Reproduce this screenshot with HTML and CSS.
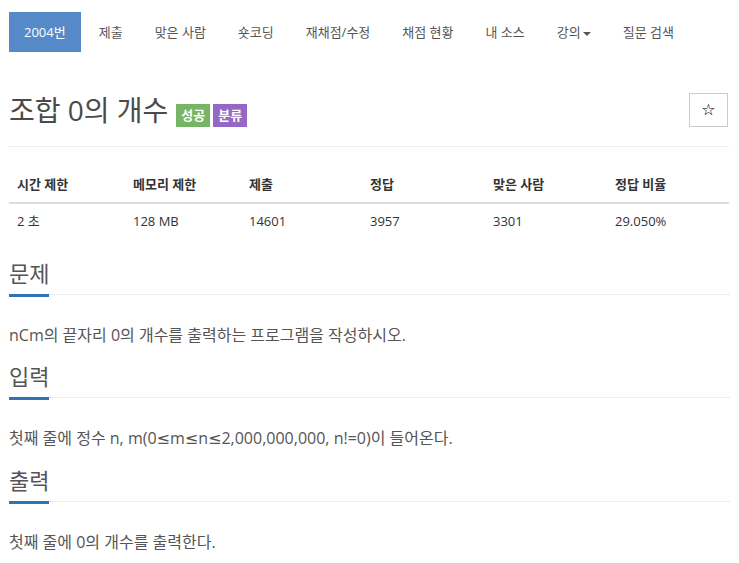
FILE: index.html
```html
<!DOCTYPE html>
<html lang="ko">
<head>
  <meta charset="UTF-8" />
  <title>2004번: 조합 0의 개수</title>
  <link rel="stylesheet" href="styles.css">
</head>
<body>
  <div class="wrapper">

    <ul class="problem-menu">
      <li class="active">2004번</li>
      <li>제출</li>
      <li>맞은 사람</li>
      <li>숏코딩</li>
      <li>재채점/수정</li>
      <li>채점 현황</li>
      <li>내 소스</li>
      <li>강의<span class="caret"></span></li>
      <li>질문 검색</li>
    </ul>

    <div class="page-header">
      <h1 class="problem-title">
        <span>조합 0의 개수</span>
        <span class="label label-success">성공</span>
        <span class="label label-purple">분류</span>
      </h1>
      <button class="btn-star">&#9734;</button>
    </div>

    <table class="problem-info">
      <thead>
        <tr>
          <th>시간 제한</th>
          <th>메모리 제한</th>
          <th>제출</th>
          <th>정답</th>
          <th>맞은 사람</th>
          <th>정답 비율</th>
        </tr>
      </thead>
      <tbody>
        <tr>
          <td>2 초</td>
          <td>128 MB</td>
          <td>14601</td>
          <td>3957</td>
          <td>3301</td>
          <td>29.050%</td>
        </tr>
      </tbody>
    </table>

    <section class="problem-section">
      <h2 class="headline"><span>문제</span></h2>
      <p>nCm의 끝자리 0의 개수를 출력하는 프로그램을 작성하시오.</p>
    </section>

    <section class="problem-section">
      <h2 class="headline"><span>입력</span></h2>
      <p>첫째 줄에 정수 n, m(0<span class="math">≤</span>m<span class="math">≤</span>n<span class="math">≤</span>2,000,000,000, n!=0)이 들어온다.</p>
    </section>

    <section class="problem-section">
      <h2 class="headline"><span>출력</span></h2>
      <p>첫째 줄에 0의 개수를 출력한다.</p>
    </section>

  </div>
</body>
</html>
```

FILE: styles.css
```css
body { margin: 0; font-family: "Open Sans", "Noto Sans CJK KR", sans-serif; font-size: 14px; color: #333; background: #fff; }
.wrapper { padding: 12px 10px 0 9px; }

/* problem menu */
.problem-menu { list-style: none; margin: 0; padding: 0; display: flex; font-size: 13px; }
.problem-menu li { height: 40px; line-height: 40px; padding: 0 16px; color: #555; white-space: nowrap; }
.problem-menu li.active { padding: 0 15px; margin-right: 2px; background: #5589c7; color: #fff; }
.caret { display: inline-block; width: 0; height: 0; margin-left: 2px; vertical-align: middle; border-top: 4px solid #555; border-left: 4px solid transparent; border-right: 4px solid transparent; }

/* title */
.page-header { display: flex; align-items: center; justify-content: space-between; margin-top: 40px; padding-bottom: 19px; border-bottom: 1px solid #eee; }
.problem-title { display: flex; align-items: center; margin: 0; font-size: 28px; font-weight: normal; line-height: 34px; color: #4a4a4a; }
.label { display: inline-block; height: 23px; line-height: 23px; padding: 0 5px; margin-top: 12px; font-size: 13px; font-weight: bold; color: #fff; }
.problem-title .label-success { margin-left: 8px; background: #77b566; }
.problem-title .label-purple { margin-left: 3px; background: #9568c6; }
.btn-star { width: 39px; height: 34px; margin-right: 1px; padding: 0; border: 1px solid #ccc; background: #fff; color: #000; font-size: 16px; font-family: "DejaVu Sans", sans-serif; }

/* info table */
.problem-info { width: 720px; margin: 20px 0 19px; border-collapse: collapse; font-size: 13px; }
.problem-info th, .problem-info td { padding: 8px; line-height: 19px; text-align: left; }
.problem-info th { border-bottom: 2px solid #ddd; font-weight: bold; color: #333; }
.problem-info th:nth-child(1), .problem-info th:nth-child(2) { width: 100px; }
.problem-info th:nth-child(3) { width: 105px; }
.problem-info th:nth-child(4) { width: 107px; }
.problem-info th:nth-child(5) { width: 106px; }

/* sections */
.headline { display: flex; margin: 0; font-size: 22px; font-weight: normal; line-height: 30px; color: #555; }
.headline span { padding-bottom: 6px; border-bottom: 3px solid #3173b7; }
.headline::after { content: ""; flex: 1; height: 0; align-self: flex-end; margin-bottom: 2px; border-top: 1px dotted #ddd; }
.problem-section p { margin: 27px 0 15px; font-size: 16px; line-height: 22px; color: #555; }
.math { font-family: "DejaVu Sans", sans-serif; }
```
